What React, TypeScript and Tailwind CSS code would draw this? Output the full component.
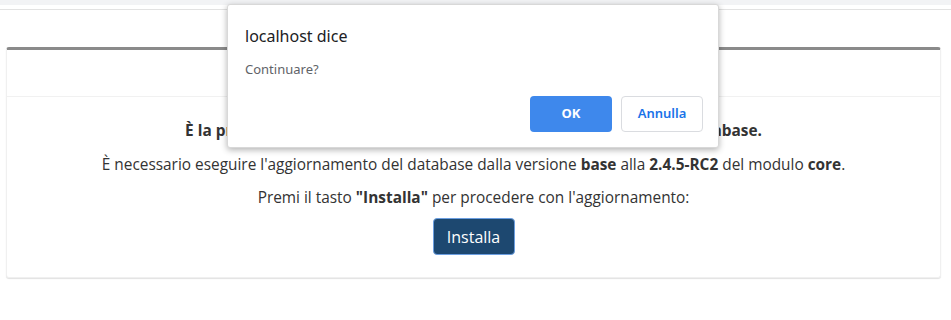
import React from "react";

export default function App() {
  return (
    <div className="relative w-[951px] h-[320px] bg-white overflow-hidden" style={{ fontFamily: '"Open Sans", "Noto Sans", sans-serif' }}>
      <div className="h-[5px] bg-[#f2f3f5]" />
      <div className="mt-[4px] border-t border-[#e2e2e2]" />
      <div className="mx-[6px] mt-[37px] w-[935px] rounded-[3px] border border-[#f0f0f0] border-t-[3px] border-t-[#8a8a8a] shadow-[0_1px_1px_rgba(0,0,0,0.12)] bg-white">
        <div className="h-[47px] border-b border-[#f1f1f1]" />
        <div className="pt-[23px] pb-[22px] text-center text-[15.4px] leading-[22px] text-[#333]">
          <p className="font-bold">È la prima volta che avvii OpenSTAManager e non hai installato il database.</p>
          <p className="mt-[12px]">
            È necessario eseguire l'aggiornamento del database dalla versione <b>base</b> alla <b>2.4.5-RC2</b> del modulo <b>core</b>.
          </p>
          <p className="mt-[11px]">
            Premi il tasto <b>"Installa"</b> per procedere con l'aggiornamento:
          </p>
          <div className="mt-[9px] flex justify-center">
            <button className="w-[82px] h-[37px] rounded-[4px] bg-[#1d4870] border border-[#6b9ee0] text-white text-[16px] leading-none">
              Installa
            </button>
          </div>
        </div>
      </div>

      <div
        className="absolute left-[227px] top-[4px] w-[492px] h-[144px] bg-white rounded-[3px] border border-[#d8d8d8] shadow-[0_2px_6px_rgba(0,0,0,0.3)] pl-[17px] pr-[15px]"
        style={{ fontFamily: '"Noto Sans", "Open Sans", sans-serif' }}
      >
        <div className="pt-[20px] text-[16px] leading-[22px] text-[#202124]">localhost dice</div>
        <div className="mt-[13px] text-[13px] leading-[18px] text-[#5f6368]">Continuare?</div>
        <div className="mt-[18px] flex justify-end gap-[9px]">
          <button className="w-[82px] h-[36px] rounded-[4px] bg-[#3e88ec] text-white text-[13px] font-bold">OK</button>
          <button className="w-[82px] h-[36px] rounded-[4px] bg-white border border-[#dadce0] text-[#1a73e8] text-[13px] font-semibold">Annulla</button>
        </div>
      </div>
    </div>
  );
}
